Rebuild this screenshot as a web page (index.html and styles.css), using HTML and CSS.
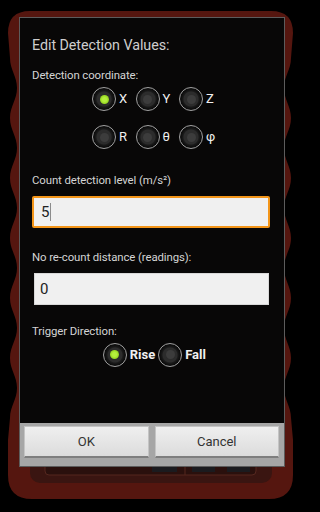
FILE: index.html
```html
<!DOCTYPE html>
<html>
<head>
<meta charset="utf-8">
<link rel="stylesheet" href="styles.css">
</head>
<body>
<div class="screen">
  <svg class="backdrop" width="301" height="512" viewBox="0 0 301 512">
    <path class="frame" d="M30 11 H271 Q293 11 293 33 L291 58
      C291 70 284 76 284 88 C284 100 291 106 291 118
      C291 130 284 136 284 148 C284 160 291 166 291 178
      C291 190 284 196 284 208 C284 220 291 226 291 238
      C291 250 284 256 284 268 C284 280 291 286 291 298
      C291 310 284 316 284 328 C284 340 291 346 291 358
      C291 370 284 376 284 388 C284 400 291 406 291 418
      L293 440 L293 475 Q293 499 269 499 H32 Q8 499 8 475 L8 440 L10 418
      C10 406 17 400 17 388 C17 376 10 370 10 358
      C10 346 17 340 17 328 C17 316 10 310 10 298
      C10 286 17 280 17 268 C17 256 10 250 10 238
      C10 226 17 220 17 208 C17 196 10 190 10 178
      C10 166 17 160 17 148 C17 136 10 130 10 118
      C10 106 17 100 17 88 C17 76 10 70 10 58
      L8 33 Q8 11 30 11 Z"/>
    <rect class="panel" x="30" y="430" width="242" height="53" rx="10"/>
    <rect class="keys" x="45" y="430" width="211" height="45" rx="4"/>
    <line class="keyline" x1="185" y1="466" x2="185" y2="475"/>
    <rect class="key" x="152" y="466" width="25" height="6"/>
    <rect class="key" x="192" y="466" width="23" height="6"/>
    <rect class="key" x="227" y="466" width="23" height="6"/>
  </svg>

  <div class="dialog">
    <div class="content">
      <h1 class="title">Edit Detection Values:</h1>
      <div class="label label-coord">Detection coordinate:</div>
      <div class="radio-grid">
        <div class="radio"><span class="ring"><span class="dot on"></span></span><span class="rlabel">X</span></div>
        <div class="radio"><span class="ring"><span class="dot"></span></span><span class="rlabel">Y</span></div>
        <div class="radio"><span class="ring"><span class="dot"></span></span><span class="rlabel">Z</span></div>
        <div class="radio"><span class="ring"><span class="dot"></span></span><span class="rlabel">R</span></div>
        <div class="radio"><span class="ring"><span class="dot"></span></span><span class="rlabel">θ</span></div>
        <div class="radio"><span class="ring"><span class="dot"></span></span><span class="rlabel">φ</span></div>
      </div>
      <div class="label label-count">Count detection level (m/s²)</div>
      <div class="field focused"><span class="val">5</span><span class="caret"></span></div>
      <div class="label label-dist">No re-count distance (readings):</div>
      <div class="field plain"><span class="val">0</span></div>
      <div class="label label-trig">Trigger Direction:</div>
      <div class="radio-row">
        <div class="radio"><span class="ring"><span class="dot on"></span></span><span class="rlabel bold">Rise</span></div>
        <div class="radio"><span class="ring"><span class="dot"></span></span><span class="rlabel bold">Fall</span></div>
      </div>
    </div>
    <div class="buttons">
      <div class="btn">OK</div>
      <div class="btn">Cancel</div>
    </div>
  </div>
</div>
</body>
</html>
```

FILE: styles.css
```css
* { box-sizing: border-box; margin: 0; padding: 0; }
html, body { margin: 0; background: #000; }
body { font-family: Roboto, "Noto Sans", "Liberation Sans", sans-serif; }

.screen { position: relative; width: 301px; height: 512px; overflow: hidden; background: #000; }
.backdrop { display: block; }
.frame { fill: #55160f; }
.panel { fill: #3a1511; }
.keys { fill: #2a100d; stroke: #55271f; stroke-width: 1; }
.keyline { stroke: #55271f; stroke-width: 1; }
.key { fill: #1b1b1f; }

.dialog {
  position: absolute; left: 19px; top: 17px;
  width: 266px; height: 450px;
  border: 1px solid #5c5c5c;
  background: #080707;
  display: flex; flex-direction: column;
}
.content { flex: 1; padding: 17.5px 0 0 12px; }

.title { font-size: 14.3px; line-height: 18px; font-weight: 400; color: #cecece; letter-spacing: -0.05px; }
.label { font-size: 11.4px; line-height: 14px; color: #d4d4d4; letter-spacing: -0.1px; }
.label-coord { margin-top: 14px; }
.label-count { margin-top: 24.4px; }
.label-dist { margin-top: 22px; }
.label-trig { margin-top: 19px; }

.radio-grid {
  display: grid;
  grid-template-columns: 43.5px 43.5px auto;
  row-gap: 14px;
  margin-top: 5.6px;
  padding-left: 60px;
}
.radio { display: flex; align-items: center; gap: 3px; }
.ring {
  width: 24px; height: 24px; border-radius: 50%;
  border: 1.5px solid #a0a0a0;
  background: radial-gradient(circle, #2c2c2c 0 7px, #1a1a1a 8px, #0d0d0d 10px);
  display: flex; align-items: center; justify-content: center;
  flex: none;
}
.dot { width: 9px; height: 9px; border-radius: 50%; background: #3c3c3c; }
.dot.on { background: radial-gradient(circle, #b4ef3c 0 2px, #92d21e 4.5px); }
.rlabel { font-size: 13px; line-height: 16px; color: #f0f0f0; }
.rlabel.bold { font-weight: 700; }

.field {
  height: 32px; display: flex; align-items: center;
  font-size: 15px; color: #222; background: #f0f0f0;
}
.field.focused {
  margin-top: 8.6px; width: 238px;
  border: 2px solid #f39519; border-radius: 2px;
  padding-left: 7px;
}
.field.plain {
  margin-top: 9px; margin-left: 2px; width: 235px;
  border: 1px solid #d8d8d8;
  padding-left: 5px;
}
.caret { width: 1px; height: 18px; background: #8c8c8c; margin-left: 1px; }

.radio-row { display: flex; gap: 3px; margin-top: 4.7px; padding-left: 70.7px; }

.buttons {
  height: 43px; flex: none;
  background: #a6a6a6;
  display: flex; gap: 6px;
  padding: 3px 5px 8px 4px;
}
.btn {
  flex: 1; height: 32px;
  background: linear-gradient(#efefef, #dcdcdc);
  border: 1px solid #c4c4c4; border-bottom: 2px solid #7e7e7e;
  display: flex; align-items: center; justify-content: center;
  font-size: 13px; color: #333;
}
```
